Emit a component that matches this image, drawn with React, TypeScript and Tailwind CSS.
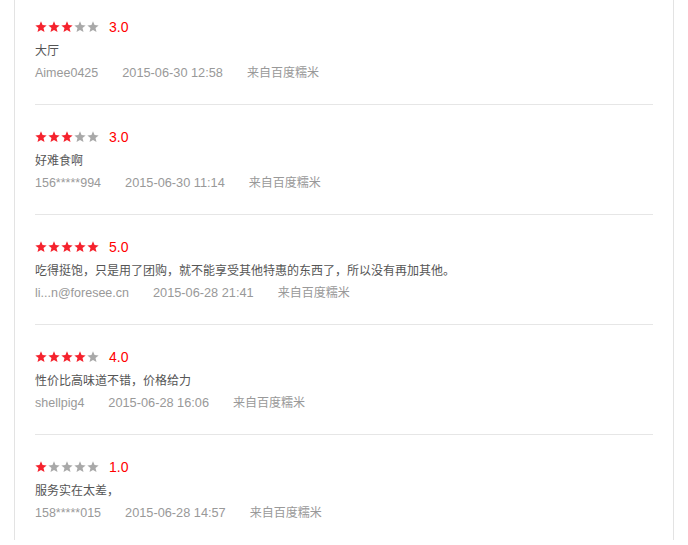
import React from "react";

type Review = {
  score: number;
  text: string;
  user: string;
  time: string;
};

const REVIEWS: Review[] = [
  { score: 3, text: "大厅", user: "Aimee0425", time: "2015-06-30 12:58" },
  { score: 3, text: "好难食啊", user: "156*****994", time: "2015-06-30 11:14" },
  {
    score: 5,
    text: "吃得挺饱，只是用了团购，就不能享受其他特惠的东西了，所以没有再加其他。",
    user: "li...n@foresee.cn",
    time: "2015-06-28 21:41",
  },
  { score: 4, text: "性价比高味道不错，价格给力", user: "shellpig4", time: "2015-06-28 16:06" },
  { score: 1, text: "服务实在太差，", user: "158*****015", time: "2015-06-28 14:57" },
];

function Star({ on }: { on: boolean }) {
  return (
    <svg width="13" height="12" viewBox="0 0 26 24" aria-hidden>
      <path
        d="M12 0.6l3.1 7.6 8.2 0.6-6.3 5.3 2 8-7-4.3-7 4.3 2-8L0.7 8.8l8.2-0.6z"
        fill={on ? "#f5222d" : "#a9a9a9"}
      />
    </svg>
  );
}

function ReviewItem({ r }: { r: Review }) {
  return (
    <li className="border-b border-[#e6e6e6] pt-[22px] pb-[21px] last:border-b-0">
      <div className="flex h-5 items-center">
        <div className="flex">
          {[1, 2, 3, 4, 5].map((i) => (
            <Star key={i} on={i <= r.score} />
          ))}
        </div>
        <span className="ml-[9px] text-[14px] leading-5 text-[#ff0000]">
          {r.score.toFixed(1)}
        </span>
      </div>
      <p className="mt-[4px] h-5 text-[12px] leading-5 text-[#555]">{r.text}</p>
      <div className="mt-[2px] flex h-5 items-center gap-6 text-[12.5px] leading-5 text-[#999]">
        <span>{r.user}</span>
        <span className="text-[12.75px]">{r.time}</span>
        <span className="text-[12px]">来自百度糯米</span>
      </div>
    </li>
  );
}

export default function App() {
  return (
    <div
      className="h-[545px] overflow-hidden bg-white"
      style={{ fontFamily: '"Liberation Sans", "Noto Sans CJK SC", sans-serif' }}
    >
      <div className="ml-[14px] h-full w-[660px] border-x border-[#e3e3e3] px-5">
        <ul className="-mt-[5px]">
          {REVIEWS.map((r, i) => (
            <ReviewItem key={i} r={r} />
          ))}
        </ul>
      </div>
    </div>
  );
}
